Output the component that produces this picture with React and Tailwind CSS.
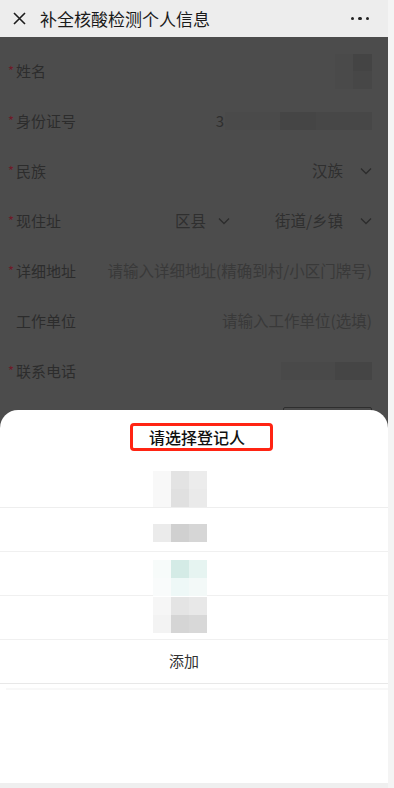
import React from "react";

const font = { fontFamily: '"Noto Sans CJK SC", "Noto Sans", sans-serif' };

const Chevron = ({ className = "" }) => (
  <svg width="12" height="8" viewBox="0 0 12 8" className={className}>
    <path d="M1 1.5 L6 6.5 L11 1.5" fill="none" stroke="#2c2c2c" strokeWidth="1.3" />
  </svg>
);

const Label = ({ text, required = true }) => (
  <div className="flex items-center text-[15px] text-[#2c2c2c]">
    <span className={required ? "w-[8px] text-[#6e1a28] text-[13px]" : "w-[8px]"}>{required ? "*" : ""}</span>
    <span>{text}</span>
  </div>
);

const FormRow = ({ children }) => (
  <div className="h-[50px] flex items-center justify-between pl-[8px] pr-[16px]">{children}</div>
);

const cells = {
  1: [
    ["#f8f8f8", "#e3e3e3", "#ececec"],
    ["#f8f8f8", "#e0e0e0", "#eaeaea"],
  ],
  2: [["#ebebeb", "#d0d0d0", "#d6d6d6"]],
  3: [
    ["#f7fbfa", "#d4ebe6", "#e6f4f1"],
    ["#f9fbfb", "#eef8f7", "#f3f9f8"],
  ],
  4: [
    ["#f6f6f6", "#e4e4e4", "#e8e8e8"],
    ["#f3f3f3", "#d5d5d5", "#d8d8d8"],
  ],
};

const Mosaic = ({ rows }) => (
  <div className="flex flex-col">
    {rows.map((r, i) => (
      <div key={i} className="flex">
        {r.map((c, j) => (
          <div key={j} className="w-[18px] h-[18px]" style={{ backgroundColor: c }} />
        ))}
      </div>
    ))}
  </div>
);

export default function App() {
  return (
    <div className="w-[394px] h-[788px] flex overflow-hidden bg-[#f4f4f4]" style={font}>
      <div className="w-[388px] flex flex-col">
        {/* nav bar */}
        <div className="h-[37px] bg-[#ededed] flex items-center pl-[13px] pr-[19px]">
          <svg width="13" height="13" viewBox="0 0 13 13">
            <path d="M1 1 L12 12 M12 1 L1 12" stroke="#1c1c1c" strokeWidth="1.6" />
          </svg>
          <span className="ml-[14px] text-[17px] text-[#1a1a1a] leading-none">补全核酸检测个人信息</span>
          <div className="ml-auto flex gap-[4px]">
            <span className="w-[3.5px] h-[3.5px] rounded-full bg-[#222]" />
            <span className="w-[3.5px] h-[3.5px] rounded-full bg-[#222]" />
            <span className="w-[3.5px] h-[3.5px] rounded-full bg-[#222]" />
          </div>
        </div>

        {/* page under mask */}
        <div className="relative flex-1 bg-[#4c4c4c]">
          <div className="pt-[9px]">
            <FormRow>
              <Label text="姓名" />
              <div className="w-[37px] h-[35px] bg-[#474747] flex">
                <div className="w-[18px] h-[35px] bg-[#4a4a4a]" />
                <div className="w-[19px] h-[17px] bg-[#444]" />
              </div>
            </FormRow>
            <FormRow>
              <Label text="身份证号" />
              <div className="flex items-center">
                <span className="text-[15px] text-[#2f2f2f]">3</span>
                <div className="ml-[1px] w-[147px] h-[18px] bg-[#484848] flex">
                  <div className="w-[55px] bg-[#4a4a4a]" />
                  <div className="w-[36px] bg-[#454545]" />
                  <div className="flex-1 bg-[#474747]" />
                </div>
              </div>
            </FormRow>
            <FormRow>
              <Label text="民族" />
              <div className="flex items-center text-[15.5px] text-[#2f2f2f]">
                <span>汉族</span>
                <Chevron className="ml-[17px]" />
              </div>
            </FormRow>
            <FormRow>
              <Label text="现住址" />
              <div className="flex items-center text-[15.5px] text-[#2f2f2f]">
                <span>区县</span>
                <Chevron className="ml-[12px]" />
                <span className="ml-[45px]">街道/乡镇</span>
                <Chevron className="ml-[17px]" />
              </div>
            </FormRow>
            <FormRow>
              <Label text="详细地址" />
              <span className="text-[15.5px] text-[#393939]">请输入详细地址(精确到村/小区门牌号)</span>
            </FormRow>
            <FormRow>
              <Label text="工作单位" required={false} />
              <span className="text-[15.5px] text-[#393939]">请输入工作单位(选填)</span>
            </FormRow>
            <FormRow>
              <Label text="联系电话" />
              <div className="w-[91px] h-[18px] bg-[#474747] flex">
                <div className="w-[54px] bg-[#494949]" />
                <div className="flex-1 bg-[#454545]" />
              </div>
            </FormRow>
            <div className="flex justify-end pr-[16px] pt-[11px]">
              <div className="w-[89px] h-[30px] border border-[#2e2e2e] rounded-[2px]" />
            </div>
          </div>

          {/* bottom sheet */}
          <div className="absolute left-0 right-0 bottom-[5px] h-[373px] bg-white rounded-t-[18px] flex flex-col">
            <div className="h-[54px] flex items-center pl-[130px]">
              <div className="w-[143px] h-[28px] border-[3px] border-[#ff2413] rounded-[4px] flex items-center pl-[16px]">
                <span className="text-[16px] font-medium text-[#111] leading-none">请选择登记人</span>
              </div>
            </div>
            <div className="h-[44px] border-b border-[#eeeeee] pl-[153px] pt-[7px]">
              <Mosaic rows={cells[1]} />
            </div>
            <div className="h-[44px] border-b border-[#f0f0f0] pl-[153px] pt-[16px]">
              <Mosaic rows={cells[2]} />
            </div>
            <div className="h-[44px] border-b border-[#f0f0f0] pl-[153px] pt-[8px]">
              <Mosaic rows={cells[3]} />
            </div>
            <div className="h-[44px] border-b border-[#f0f0f0] pl-[153px] pt-[1px]">
              <Mosaic rows={cells[4]} />
            </div>
            <div className="h-[44px] border-b border-[#e8e8e8] pl-[169px] flex items-center">
              <span className="text-[15px] text-[#333]">添加</span>
            </div>
            <div className="mt-[4px] ml-[6px] h-[2px] bg-[#f8f8f8]" />
          </div>
          <div className="absolute left-0 right-0 bottom-0 h-[5px] bg-[#efefef]" />
        </div>
      </div>
      <div className="flex-1 bg-[#f4f4f4]" />
    </div>
  );
}
